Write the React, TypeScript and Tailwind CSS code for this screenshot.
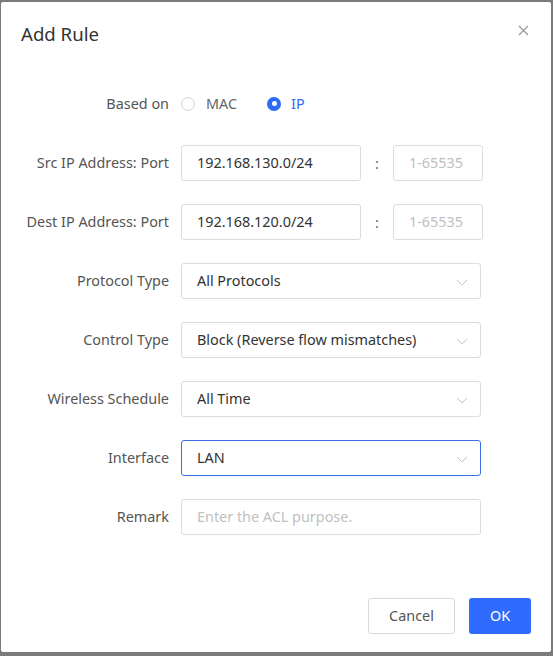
import type { ReactNode } from "react";

const font = { fontFamily: '"Noto Sans", "Open Sans", Arial, sans-serif' };

function Row({ label, children }: { label: string; children: ReactNode }) {
  return (
    <div className="flex items-center h-[36px]">
      <div className="w-[168px] text-right text-[14.4px] text-[#555] leading-none">{label}</div>
      <div className="ml-[12px] flex items-center">{children}</div>
    </div>
  );
}

function Chevron() {
  return (
    <svg width="12" height="7" viewBox="0 0 12 7" fill="none" className="absolute right-[12px] top-[15px]">
      <path d="M1 1l5 5 5-5" stroke="#c4c4c4" strokeWidth="1" />
    </svg>
  );
}

function Select({ value, focused }: { value: string; focused?: boolean }) {
  return (
    <div
      className={
        "relative w-[300px] h-[36px] rounded-[3px] border bg-white flex items-center pl-[15px] text-[14.4px] text-[#333] " +
        (focused ? "border-[#3a6fe8]" : "border-[#dcdcdc]")
      }
    >
      {value}
      <Chevron />
    </div>
  );
}

function TextBox({ value, placeholder, w }: { value?: string; placeholder?: string; w: string }) {
  return (
    <div
      className={
        w +
        " h-[36px] rounded-[3px] border border-[#dcdcdc] bg-white flex items-center pl-[15px] text-[14.4px] " +
        (value ? "text-[#333]" : "text-[#bfbfbf]")
      }
    >
      {value ?? placeholder}
    </div>
  );
}

function IpPort({ ip }: { ip: string }) {
  return (
    <>
      <TextBox w="w-[180px]" value={ip} />
      <span className="w-[32px] text-center text-[14px] text-[#666]">:</span>
      <TextBox w="w-[90px]" placeholder="1-65535" />
    </>
  );
}

export default function App() {
  return (
    <div className="w-[553px] h-[656px] bg-[#7b7b7b] pt-[2px] pl-[1px] overflow-hidden" style={font}>
      <div className="relative w-[550px] h-[650px] bg-white rounded-[2px] flex flex-col">
        <div className="pt-[21px] pl-[20px] text-[18.6px] leading-[22px] text-[#333]">Add Rule</div>
        <svg
          width="11"
          height="11"
          viewBox="0 0 11 11"
          className="absolute right-[22px] top-[23px]"
        >
          <path d="M1 1l9 9M10 1l-9 9" stroke="#999" strokeWidth="1.2" />
        </svg>

        <div className="mt-[41px] flex flex-col gap-[23px]">
          <Row label="Based on">
            <span className="w-[14px] h-[14px] rounded-full border border-[#d4d4d4] bg-white" />
            <span className="ml-[11px] text-[14.4px] text-[#666]">MAC</span>
            <span className="ml-[30px] w-[14px] h-[14px] rounded-full bg-[#2d6af6] flex items-center justify-center">
              <span className="w-[5px] h-[5px] rounded-full bg-white" />
            </span>
            <span className="ml-[10px] text-[14.4px] text-[#2d6af6]">IP</span>
          </Row>
          <Row label="Src IP Address: Port">
            <IpPort ip="192.168.130.0/24" />
          </Row>
          <Row label="Dest IP Address: Port">
            <IpPort ip="192.168.120.0/24" />
          </Row>
          <Row label="Protocol Type">
            <Select value="All Protocols" />
          </Row>
          <Row label="Control Type">
            <Select value="Block (Reverse flow mismatches)" />
          </Row>
          <Row label="Wireless Schedule">
            <Select value="All Time" />
          </Row>
          <Row label="Interface">
            <Select value="LAN" focused />
          </Row>
          <Row label="Remark">
            <TextBox w="w-[300px]" placeholder="Enter the ACL purpose." />
          </Row>
        </div>

        <div className="mt-auto pb-[18px] pr-[20px] flex justify-end gap-[14px]">
          <button className="w-[87px] h-[36px] rounded-[3px] border border-[#d9d9d9] bg-white text-[14.4px] text-[#555]">
            Cancel
          </button>
          <button className="w-[62px] h-[36px] rounded-[3px] bg-[#2f6bff] text-[14.4px] text-white">
            OK
          </button>
        </div>
      </div>
    </div>
  );
}
